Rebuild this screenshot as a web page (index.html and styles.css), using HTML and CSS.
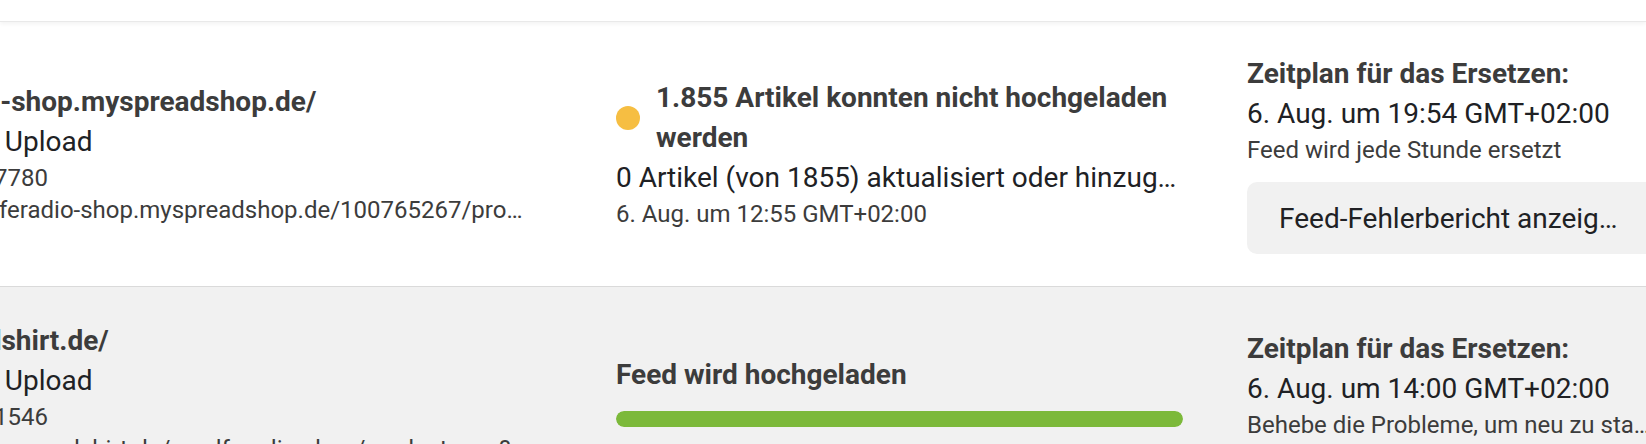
FILE: index.html
```html
<!DOCTYPE html>
<html lang="de">
<head>
<meta charset="utf-8">
<title>Datenquellen</title>
<link rel="stylesheet" href="styles.css">
</head>
<body>
<div class="topbar"></div>
<div class="list">
  <div class="row">
    <div class="col col-name">
      <div class="title ellip">woolferadio-shop.myspreadshop.de/</div>
      <div class="main ellip">Dateiquelle: Upload</div>
      <div class="sub ellip">ID: 102845637780</div>
      <div class="sub url ellip">https://woolferadio-shop.myspreadshop.de/100765267/products.rss?pushState=false&amp;targetPlatform=google</div>
    </div>
    <div class="col col-status">
      <div class="status-head">
        <span class="dot"></span>
        <span class="title">1.855 Artikel konnten nicht hochgeladen werden</span>
      </div>
      <div class="main ellip">0 Artikel (von 1855) aktualisiert oder hinzugefügt</div>
      <div class="sub ellip">6. Aug. um 12:55 GMT+02:00</div>
    </div>
    <div class="col col-sched">
      <div class="title ellip">Zeitplan für das Ersetzen:</div>
      <div class="main ellip">6. Aug. um 19:54 GMT+02:00</div>
      <div class="sub ellip">Feed wird jede Stunde ersetzt</div>
      <button class="btn"><span class="ellip">Feed-Fehlerbericht anzeigen</span></button>
    </div>
  </div>
  <div class="row alt">
    <div class="col col-name">
      <div class="title ellip">beta.spreadshirt.de/</div>
      <div class="main ellip">Dateiquelle: Upload</div>
      <div class="sub ellip">ID: 102845631546</div>
      <div class="sub url ellip">https://www.spreadshirt.de/woolferadio-shop/products.rss?</div>
      <div class="sub ellip">Zielland: Deutschland</div>
      <div class="sub ellip">Sprache: Deutsch</div>
    </div>
    <div class="col col-status">
      <div class="title ellip">Feed wird hochgeladen</div>
      <div class="progress"><div class="progress-fill"></div></div>
      <div class="main ellip">Dies kann einige Minuten dauern</div>
    </div>
    <div class="col col-sched">
      <div class="title ellip">Zeitplan für das Ersetzen:</div>
      <div class="main ellip">6. Aug. um 14:00 GMT+02:00</div>
      <div class="sub ellip">Behebe die Probleme, um neu zu starten</div>
      <button class="btn btn-small"><span class="ellip">Feed jetzt abrufen</span></button>
    </div>
  </div>
</div>
</body>
</html>
```
FILE: styles.css
```css
* { box-sizing: border-box; }

html, body {
  margin: 0;
  padding: 0;
  background: #ffffff;
  overflow: hidden;
}

body {
  font-family: Roboto, "Noto Sans", "Liberation Sans", sans-serif;
  color: #202124;
}

.topbar {
  height: 22px;
  background: #ffffff;
  border-bottom: 1px solid #e9e9e9;
  box-shadow: 0 2px 4px rgba(0, 0, 0, 0.05);
  position: relative;
  z-index: 1;
}

.list {
  margin-left: -148px;
  width: max-content;
}

.row {
  display: grid;
  grid-template-columns: 700px 567px 410px;
  column-gap: 64px;
  align-items: center;
  padding: 32px 0;
  background: #ffffff;
  border-bottom: 1px solid #dadada;
}

.row.alt {
  background: #f1f1f1;
  padding-top: 34px;
}

.col {
  min-width: 0;
}

.col-name {
  padding-right: 24px;
}

.ellip {
  display: block;
  white-space: nowrap;
  overflow: hidden;
  text-overflow: ellipsis;
}

.title {
  font-size: 28px;
  line-height: 40px;
  font-weight: 700;
  color: #3c3c3c;
}

.main {
  font-size: 28px;
  line-height: 40px;
  color: #202124;
}

.sub {
  font-size: 24px;
  line-height: 32px;
  color: #3c3c3c;
}

.url {
  padding-left: 18px;
}

.status-head {
  display: flex;
  align-items: center;
  gap: 16px;
}

.status-head .title {
  flex: 1;
  min-width: 0;
}

.dot {
  flex: none;
  width: 24px;
  height: 24px;
  border-radius: 50%;
  background: #f6be42;
}

.progress {
  margin: 16px 0 28px;
  height: 16px;
  border-radius: 8px;
  background: #dfe9d3;
  overflow: hidden;
}

.progress-fill {
  height: 100%;
  width: 100%;
  border-radius: 8px;
  background: #7cb93a;
}

.btn {
  display: block;
  width: 100%;
  margin-top: 16px;
  height: 72px;
  padding: 0 32px;
  border: none;
  border-radius: 10px;
  background: #f1f1f1;
  font-family: inherit;
  font-size: 28px;
  color: #202124;
  text-align: center;
}

.btn-small {
  height: 64px;
  background: #e4e4e4;
}
```
